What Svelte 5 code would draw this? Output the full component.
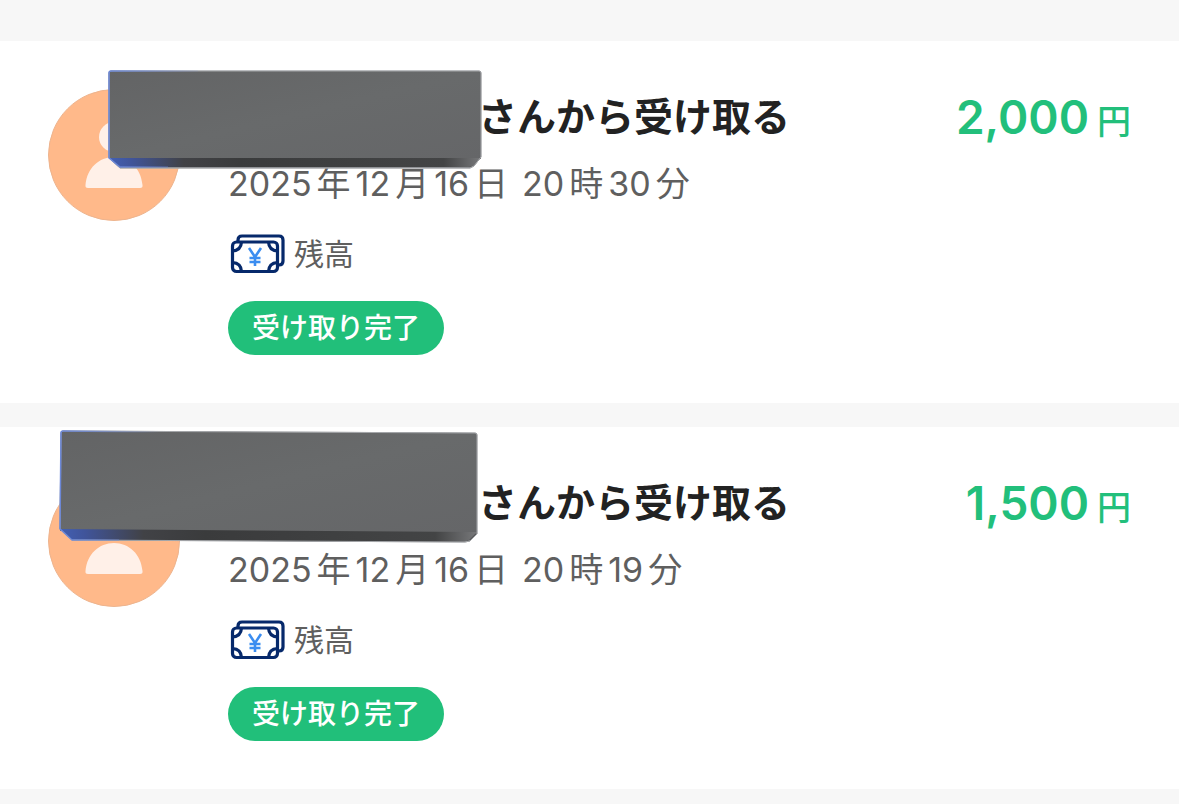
<script lang="ts">
  interface Cover {
    x: number;
    y: number;
    width: number;
    height: number;
    outline: string;
    face: string;
    bevel: string;
    edge: string;
  }

  interface Transfer {
    id: string;
    amount: number;
    date: string[];
    time: string[];
    cover: Cover;
  }

  const transfers: Transfer[] = [
    {
      id: 't1',
      amount: 2000,
      date: ['2025', '年', '12', '月', '16', '日'],
      time: ['20', '時', '30', '分'],
      cover: {
        x: 108, y: 29, width: 374, height: 99,
        outline: 'M3 1H371Q373 1 373 3V87L366 96L362 98H12L1 88V3Q1 1 3 1Z',
        face: 'M1 3Q1 1 3 1H371Q373 1 373 3V89H1Z',
        bevel: 'M1 88H373L365 96L360 97H12Z',
        edge: 'M90 1H3Q1 1 1 3V88L12 97H60',
      },
    },
    {
      id: 't2',
      amount: 1500,
      date: ['2025', '年', '12', '月', '16', '日'],
      time: ['20', '時', '19', '分'],
      cover: {
        x: 59, y: 3, width: 420, height: 113,
        outline: 'M4 1L416 3Q418 3 418 5V104L411 111L406 112L13 110L1 99L2 3Q2 1 4 1Z',
        face: 'M2 3Q2 1 4 1L416 3Q418 3 418 5V104L1 101Z',
        bevel: 'M1 99L418 102L410 110L405 112L13 110Z',
        edge: 'M100 2L4 1Q2 1 2 3L1 99L13 110H60',
      },
    },
  ];
</script>

<main class="history">
  {#each transfers as t (t.id)}
    <article class="card">
      <svg class="avatar" viewBox="0 0 132 132" aria-hidden="true">
        <circle cx="66" cy="66" r="65.5" fill="#ffb98a" stroke="#edb48e" />
        <circle cx="66" cy="48" r="15" fill="#fff0e8" />
        <path d="M40 99Q37 99 37.500 96C39 79 51 68 66 68S93 79 94.500 96Q95 99 92 99Z" fill="#fff0e8" />
      </svg>

      <div class="body">
        <div class="head">
          <h2><span class="name"></span>さんから受け取る</h2>
          <p class="amount">{t.amount.toLocaleString('en-US')}<span class="unit">円</span></p>
        </div>
        <p class="when">
          <span class="parts">{#each t.date as part}<span>{part}</span>{/each}</span>
          <span class="parts">{#each t.time as part}<span>{part}</span>{/each}</span>
        </p>
        <p class="source">
          <svg class="bills" viewBox="0 0 56 40" fill="none" stroke="#06296b" stroke-width="3.200" aria-hidden="true">
            <path d="M8 7V6Q8 2 12 2H49Q53 2 53 6V27Q53 31 49 31H48" />
            <rect x="2.500" y="8" width="45" height="29.500" rx="4" fill="#fff" />
            <path d="M11.500 8Q11 16.500 2.500 17M38.500 8Q39 16.500 47.500 17M11.500 37.500Q11 29 2.500 28.500M38.500 37.500Q39 29 47.500 28.500" />
            <path d="M19 14L25 23L31 14M25 23V32M19.500 24H30.500M19.500 28H30.500" stroke="#3b8df0" stroke-width="2.600" />
          </svg>
          残高
        </p>
        <span class="badge">受け取り完了</span>
      </div>

      <svg
        class="cover"
        style="left: {t.cover.x}px; top: {t.cover.y}px; width: {t.cover.width}px; height: {t.cover.height}px"
        viewBox="0 0 {t.cover.width} {t.cover.height}"
        aria-hidden="true"
      >
        <defs>
          <linearGradient id="face-{t.id}" x1="0" y1="0" x2="1" y2="1">
            <stop offset="0" stop-color="#636465" />
            <stop offset="0.5" stop-color="#686a6b" />
            <stop offset="1" stop-color="#656668" />
          </linearGradient>
          <linearGradient id="bevel-{t.id}" x1="0" y1="0" x2="1" y2="0">
            <stop offset="0" stop-color="#4260b4" />
            <stop offset="0.06" stop-color="#40549a" />
            <stop offset="0.2" stop-color="#414246" />
            <stop offset="0.35" stop-color="#3a3b3c" />
            <stop offset="0.9" stop-color="#434445" />
            <stop offset="1" stop-color="#77787a" />
          </linearGradient>
          <linearGradient id="edge-{t.id}" gradientUnits="userSpaceOnUse" x1="0" y1="0" x2="100" y2="0">
            <stop offset="0" stop-color="#6b87d8" />
            <stop offset="1" stop-color="#6b87d8" stop-opacity="0" />
          </linearGradient>
        </defs>
        <path d={t.cover.outline} fill="#57585a" stroke="#a5a7aa" />
        <path d={t.cover.face} fill="url(#face-{t.id})" />
        <path d={t.cover.bevel} fill="url(#bevel-{t.id})" />
        <path d={t.cover.outline} fill="none" stroke="#a5a7aa" />
        <path d={t.cover.edge} fill="none" stroke="url(#edge-{t.id})" stroke-width="1.500" />
      </svg>
    </article>
  {/each}
</main>

<style>
  :global(body) {
    margin: 0;
    background: #f7f7f7;
  }

  .history {
    display: flex;
    flex-direction: column;
    gap: 24px;
    padding: 41px 0 15px;
    font-family: Inter, "Noto Sans CJK JP", sans-serif;
    color: #5f5f5f;
  }

  .card {
    position: relative;
    display: flex;
    align-items: flex-start;
    gap: 48px;
    padding: 48px;
    background: #fff;
  }

  .avatar {
    width: 132px;
    height: 132px;
    flex-shrink: 0;
  }

  .body {
    flex: 1;
    min-width: 0;
  }

  .head {
    display: flex;
    justify-content: space-between;
    height: 56px;
    line-height: 56px;
    white-space: nowrap;
  }

  h2, p { margin: 0; }

  h2 {
    display: flex;
    font-size: 39px;
    font-weight: 600;
    color: #222;
  }

  .name { width: 250px; }

  .amount {
    display: flex;
    align-items: baseline;
    gap: 8px;
    font-size: 46px;
    font-weight: 600;
    color: #22bf7b;
  }

  .unit {
    font-size: 34px;
    font-weight: 500;
  }

  .when {
    display: flex;
    gap: 14px;
    margin-top: 16px;
    font-size: 34px;
    line-height: 46px;
  }

  .parts {
    display: flex;
    align-items: baseline;
    gap: 5px;
  }

  .source {
    display: flex;
    align-items: center;
    gap: 8px;
    margin: 24px 0;
    font-size: 30px;
    line-height: 46px;
  }

  .bills {
    width: 56px;
    height: 40px;
    margin-left: 2px;
  }

  .badge {
    display: inline-block;
    padding: 0 24px;
    border-radius: 27px;
    background: #21bf7a;
    color: #fff;
    font-size: 28px;
    font-weight: 500;
    line-height: 54px;
    vertical-align: top;
  }

  /* lies over the sender name and part of the avatar */
  .cover { position: absolute; }
</style>
